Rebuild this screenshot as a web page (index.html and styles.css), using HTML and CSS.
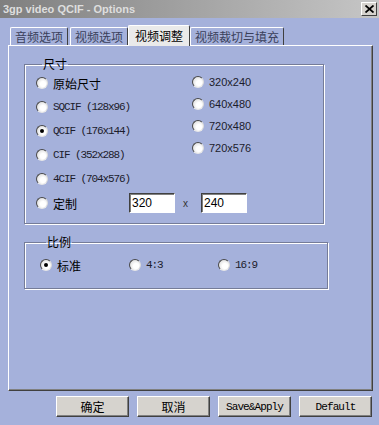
FILE: index.html
```html
<!DOCTYPE html>
<html lang="zh-CN">
<head>
  <meta charset="UTF-8">
  <title>3gp video QCIF - Options</title>
  <link rel="stylesheet" href="styles.css">
</head>
<body>
  <div class="window">
    <div class="titlebar">
      <span class="title">3gp video QCIF - Options</span>
      <span class="close">
        <svg width="9" height="8" viewBox="0 0 9 8"><path d="M0.5 0.5 L8.5 7.5 M8.5 0.5 L0.5 7.5" stroke="#000" stroke-width="1.8"/></svg>
      </span>
    </div>

    <div class="tabs">
      <div class="tab">音频选项</div>
      <div class="tab">视频选项</div>
      <div class="tab active">视频调整</div>
      <div class="tab">视频裁切与填充</div>
    </div>

    <div class="panel">
      <fieldset class="group size-group">
        <legend>尺寸</legend>
        <div class="cols">
          <div class="col left">
            <label class="opt"><span class="radio"></span><span class="cn">原始尺寸</span></label>
            <label class="opt"><span class="radio"></span><span class="mono">SQCIF (128x96)</span></label>
            <label class="opt"><span class="radio checked"></span><span class="mono">QCIF (176x144)</span></label>
            <label class="opt"><span class="radio"></span><span class="mono">CIF (352x288)</span></label>
            <label class="opt"><span class="radio"></span><span class="mono">4CIF (704x576)</span></label>
          </div>
          <div class="col right">
            <label class="opt"><span class="radio"></span><span class="sans">320x240</span></label>
            <label class="opt"><span class="radio"></span><span class="sans">640x480</span></label>
            <label class="opt"><span class="radio"></span><span class="sans">720x480</span></label>
            <label class="opt"><span class="radio"></span><span class="sans">720x576</span></label>
          </div>
        </div>
        <div class="opt custom">
          <span class="radio"></span><span class="cn">定制</span>
          <span class="field first">320</span>
          <span class="times">x</span>
          <span class="field">240</span>
        </div>
      </fieldset>

      <fieldset class="group ratio-group">
        <legend>比例</legend>
        <div class="ratio-row">
          <label class="opt ratio"><span class="radio checked"></span><span class="cn">标准</span></label>
          <label class="opt ratio"><span class="radio"></span><span class="mono">4:3</span></label>
          <label class="opt ratio"><span class="radio"></span><span class="mono">16:9</span></label>
        </div>
      </fieldset>
    </div>

    <div class="buttons">
      <button>确定</button>
      <button>取消</button>
      <button class="mono-btn">Save&amp;Apply</button>
      <button class="mono-btn">Default</button>
    </div>
  </div>
</body>
</html>
```

FILE: styles.css
```css
body {
  margin: 0;
  background-color: #a5b1db;
  font-family: "Noto Sans CJK SC", "Liberation Sans", sans-serif;
  font-size: 12px;
  color: #000;
}
.window {
  width: 379px;
  height: 425px;
  overflow: hidden;
}
.titlebar {
  height: 18px;
  display: flex;
  justify-content: space-between;
  align-items: center;
  padding: 0 2px 0 3px;
  background: linear-gradient(to right, #7f7f7f, #c6c6c6);
}
.title {
  font-family: "Liberation Sans", sans-serif;
  font-weight: bold;
  font-size: 11px;
  color: #dedede;
}
.close {
  width: 14px;
  height: 12px;
  display: flex;
  align-items: center;
  justify-content: center;
  background: #d6d3ce;
  border: 1px solid;
  border-color: #fff #404040 #404040 #fff;
}
.tabs {
  display: flex;
  align-items: flex-end;
  height: 21px;
  margin-top: 6px;
  padding-left: 10px;
}
.tab {
  height: 17px;
  line-height: 17px;
  padding: 0 4px;
  margin-right: 2px;
  color: #3a3f5a;
  border: 1px solid;
  border-bottom: none;
  border-color: #fff #404040 #fff #fff;
  border-radius: 2px 2px 0 0;
  white-space: nowrap;
}
.tab.active {
  height: 20px;
  line-height: 20px;
  padding: 0 6px;
  margin: 0 0 -1px -2px;
  background: #eaeaea;
  color: #000;
  position: relative;
  z-index: 1;
}
.panel {
  height: 344px;
  margin: 0 6px 0 8px;
  padding: 0 0 0 15px;
  border: 1px solid;
  border-color: #fff #404040 #404040 #fff;
  box-shadow: inset -1px -1px 0 #808080;
}
.group {
  margin: 11px 0 0 0;
  padding: 0;
  width: 287px;
  border: 1px solid #757c98;
  box-shadow: inset 1px 1px 0 #fff, 1px 1px 0 #fff;
}
.group legend {
  padding: 0 1px;
  margin-left: 6px;
  line-height: 14px;
}
.size-group {
  padding: 0 0 8px 11px;
}
.cols {
  display: flex;
}
.col.left {
  width: 156px;
}
.opt {
  display: flex;
  align-items: center;
  gap: 5px;
  height: 24px;
  white-space: nowrap;
}
.col.right .opt {
  height: 22px;
}
.radio {
  width: 10px;
  height: 10px;
  flex: none;
  border-radius: 50%;
  border: 1px solid;
  border-color: #4a4a4a #dcdcdc #e8e8e8 #4a4a4a;
  background: radial-gradient(circle at 60% 60%, #fff 30%, #cfcfcf);
  position: relative;
}
.radio.checked::after {
  content: "";
  position: absolute;
  left: 3px;
  top: 3px;
  width: 4px;
  height: 4px;
  border-radius: 50%;
  background: #000;
}
.mono {
  font-family: "Liberation Mono", monospace;
  font-size: 11px;
  letter-spacing: -1.1px;
  color: #1c1c2c;
}
.sans {
  font-family: "Liberation Sans", sans-serif;
  font-size: 11px;
  color: #1c1c2c;
}
.custom .field {
  width: 42px;
  height: 18px;
  line-height: 18px;
  padding-left: 2px;
  background: #fff;
  border: 1px solid;
  border-color: #404040 #fff #fff #404040;
  box-shadow: inset 1px 1px 0 #808080;
  font-family: "Liberation Sans", sans-serif;
  font-size: 12px;
}
.custom .field.first {
  margin-left: 47px;
}
.custom .times {
  width: 12px;
  margin-left: 3px;
  margin-right: 1px;
  font-family: "Liberation Sans", sans-serif;
  font-size: 10px;
  color: #333;
}
.ratio-group {
  padding: 4px 0 11px 15px;
}
.ratio-row {
  display: flex;
}
.opt.ratio {
  width: 89px;
}
.buttons {
  display: flex;
  justify-content: flex-end;
  gap: 8px;
  margin: 5px 7px 0 0;
}
.buttons button {
  width: 73px;
  height: 21px;
  padding: 0;
  background: #d6d3ce;
  border: 1px solid;
  border-color: #fff #404040 #404040 #fff;
  box-shadow: inset -1px -1px 0 #808080;
  font-family: "Noto Sans CJK SC", sans-serif;
  font-size: 12px;
  color: #000;
}
.buttons .mono-btn {
  font-family: "Liberation Mono", monospace;
  font-size: 11px;
  letter-spacing: -0.9px;
}
```
